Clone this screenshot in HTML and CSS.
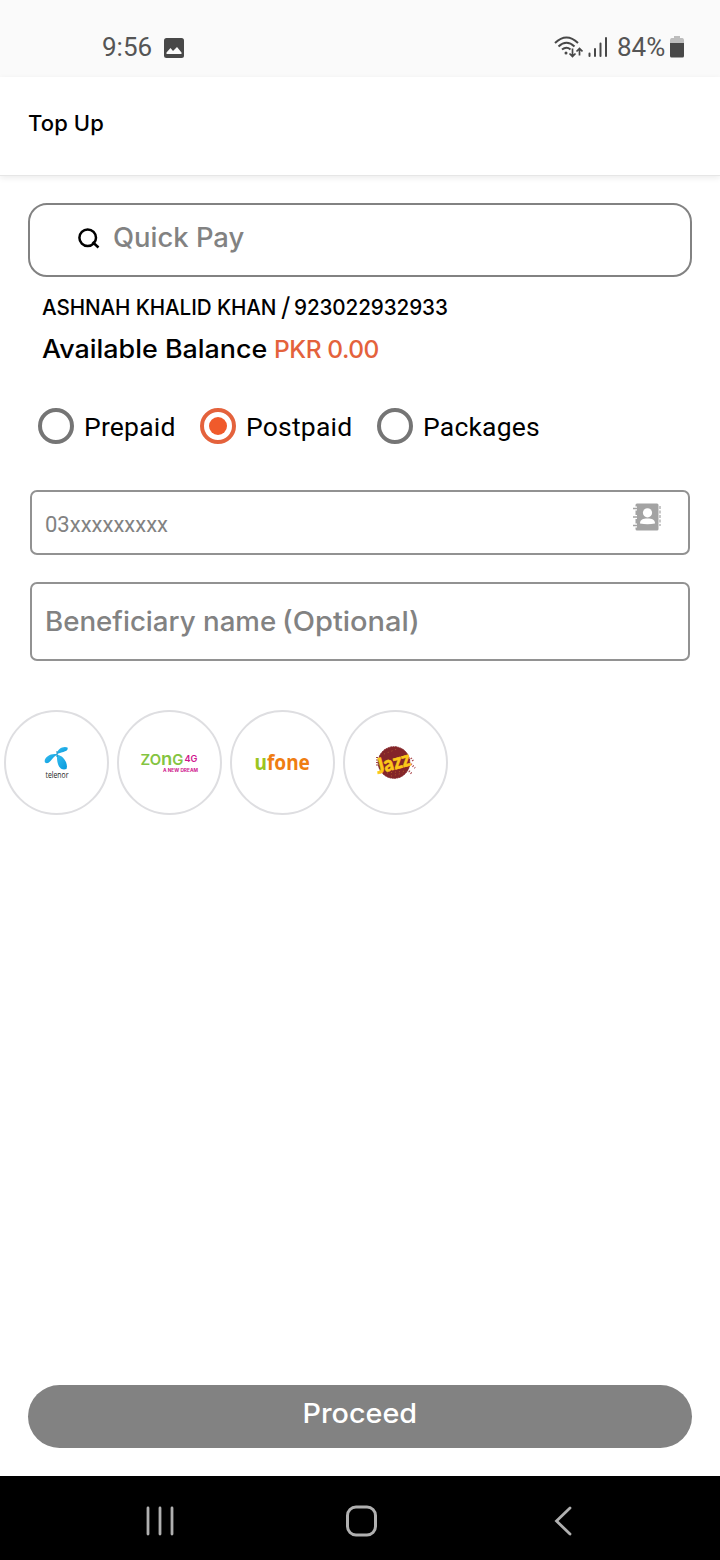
FILE: index.html
```html
<!DOCTYPE html>
<html lang="en">
<head>
<meta charset="utf-8">
<title>Top Up</title>
<link rel="stylesheet" href="styles.css">
</head>
<body>
<div class="screen">
  <div class="status">
    <span class="time">9:56</span>
    <svg class="picture" width="20" height="20" viewBox="0 0 20 20"><rect width="20" height="20" rx="2.500" fill="#484848"/><path d="M2.500 16V14.500L6.500 10L9 13L13 9L17.500 14.500V16Z" fill="#fafafa"/></svg>
    <svg class="wifi" width="29" height="24" viewBox="0 0 29 24" fill="none" stroke="#484848" stroke-width="2"><path d="M1 8Q12.500 -3 24 8M4.500 11.500Q12.500 4 20.500 11.500M8 14.500Q12.500 11 16.500 14.500"/><circle cx="12" cy="18" r="1.500" fill="#484848" stroke="none"/><path d="M18.500 13.500V21.500M15.500 18.500L18.500 21.500L21.500 18.500M25.500 20.500V13.500M22.500 16.500L25.500 13.500L28.500 16.500" stroke-width="1.700"/></svg>
    <svg class="signal" width="19" height="20" viewBox="0 0 19 20" stroke="#484848" stroke-width="2" stroke-linecap="round"><path d="M1.500 16.500V19M7 12V19M12.500 6.500V19M18 1V19"/></svg>
    <span class="percent">84%</span>
    <svg class="battery" width="14" height="22" viewBox="0 0 14 22"><path d="M4 0H10V2H12.500Q14 2.500 14 4V8H0V4Q0 2.500 1.500 2H4Z" fill="#bdbdbd"/><path d="M0 7H14V20Q14 21.500 12.500 21.500H1.500Q0 21.500 0 20Z" fill="#484848"/></svg>
  </div>
  <header class="header"><h1 class="title">Top Up</h1></header>
  <main class="content">
    <div class="search">
      <svg width="22" height="21" viewBox="0 0 22 21" fill="none" stroke="#000" stroke-width="2.500"><circle cx="9.700" cy="9.800" r="8.300"/><path d="M14.500 14L20.500 19.500"/></svg>
      <span class="search-text">Quick Pay</span>
    </div>
    <div class="account">
      <p class="name"><span class="holder">ASHNAH KHALID KHAN</span><span class="slash">/</span><span class="number">923022932933</span></p>
      <p class="balance"><span class="label">Available Balance</span><span class="amount">PKR 0.00</span></p>
    </div>
    <div class="radios">
      <div class="radio prepaid"><i class="dot"></i><span>Prepaid</span></div>
      <div class="radio postpaid on"><i class="dot"></i><span>Postpaid</span></div>
      <div class="radio"><i class="dot"></i><span>Packages</span></div>
    </div>
    <div class="field phone">
      <span class="phone-text">03xxxxxxxxx</span>
      <svg width="28" height="28" viewBox="0 0 28 28"><rect x="2.500" y=".500" width="23" height="27" rx="1.500" fill="#a3a3a3"/><path d="M0 5.500H4M0 14H4M0 22.500H4" stroke="#fff" stroke-width="4"/><path d="M0 5.500H4.500M0 14H4.500M0 22.500H4.500" stroke="#a3a3a3" stroke-width="1.600"/><circle cx="14.500" cy="9.800" r="4.600" fill="#fff"/><path d="M7 20.500C7 16.500 10 15.500 14.500 15.500S22 16.500 22 20.500Q14.500 22 7 20.500Z" fill="#fff"/><path d="M27 3V23" stroke="#a3a3a3" stroke-width="1.200" stroke-dasharray="3 1.500"/></svg>
    </div>
    <div class="field beneficiary"><span class="ben-text">Beneficiary name</span><span class="opt-text">(Optional)</span></div>
    <div class="operators">
      <div class="operator">
        <svg width="101" height="101" viewBox="0 0 101 101"><defs><linearGradient id="blue" x2="1" y2="1"><stop stop-color="#35bdf0"/><stop offset="1" stop-color="#0799dc"/></linearGradient></defs><g fill="url(#blue)"><path d="M51 42C51 36.500 58 33.500 61.500 35.500C63 39.500 57 39.500 51 42Z"/><path d="M51.500 42.500C45 40.500 37 46 39 50.500C43.500 53.500 45 46 51.500 42.500Z"/><path d="M51 42.500C57 43.500 62.500 51 60.500 57C53 59.500 50.500 51 51 42.500Z"/></g><path d="M51 39V45" stroke="#168bbd"/><text class="telenor" x="39.500" y="66" textLength="23" lengthAdjust="spacingAndGlyphs">telenor</text></svg>
      </div>
      <div class="operator">
        <svg width="101" height="101" viewBox="0 0 101 101"><text class="zong" x="21.500" y="53" textLength="43" lengthAdjust="spacingAndGlyphs">ZO<tspan class="arch">n</tspan>G</text><text class="four" x="65.500" y="49.500" textLength="13" lengthAdjust="spacingAndGlyphs">4G</text><text class="dream" x="44" y="60" textLength="35" lengthAdjust="spacingAndGlyphs">A NEW DREAM</text></svg>
      </div>
      <div class="operator">
        <svg width="101" height="101" viewBox="0 0 101 101"><text class="ufone" x="22.500" y="58" textLength="55.500" lengthAdjust="spacingAndGlyphs"><tspan fill="#9bc520">u</tspan>fone</text></svg>
      </div>
      <div class="operator">
        <svg width="101" height="101" viewBox="0 0 101 101"><circle cx="49" cy="50.500" r="15.800" fill="#842529" stroke="#842529" stroke-dasharray="2 .500"/><path d="M32 45V54M66 46L69 50M66 52L70 56M64 59L67 62" stroke="#a64045" stroke-dasharray="1 1.500" stroke-width="2"/><path d="M39 42L52 37M42 61L61 59M46 64L58 61" stroke="#ad5b2b" stroke-dasharray="1 3"/><text class="jazz" transform="translate(33 62) rotate(-15)" textLength="35" lengthAdjust="spacingAndGlyphs">Jazz</text></svg>
      </div>
    </div>
    <button class="proceed"><span class="proceed-text">Proceed</span></button>
  </main>
  <nav class="nav">
    <svg width="28" height="30" viewBox="0 0 28 30" stroke="#b0b0b0" stroke-width="2.800" stroke-linecap="round"><path d="M2 2V28M14 2V28M26 2V28"/></svg>
    <svg class="home" width="31" height="32" viewBox="0 0 31 32" fill="none" stroke="#b0b0b0" stroke-width="3"><rect x="1.500" y="2" width="28" height="28" rx="8.500"/></svg>
    <svg width="18" height="30" viewBox="0 0 18 30" fill="none" stroke="#b0b0b0" stroke-width="2.800" stroke-linecap="round"><path d="M16 2L2.500 15L16 28"/></svg>
  </nav>
</div>
</body>
</html>
```
FILE: styles.css
```css
* { box-sizing: border-box; }
body { margin: 0; background: #fff; color: #000; font-family: Inter, sans-serif; }
h1, p { margin: 0; font-weight: inherit; }
svg { display: block; flex: none; }
.screen { width: 720px; height: 1560px; display: flex; flex-direction: column; }
.status { height: 77px; background: #fafafa; display: flex; align-items: center; padding: 17px 36px 0 102px; font: 26px/28px Roboto, sans-serif; color: #555; }
.time { width: 62px; margin-top: -1px; }
.picture { margin-top: 1px; }
.wifi { margin-left: 370px; }
.signal { margin-left: 5px; }
.percent { margin-left: 10px; width: 53px; margin-top: -1px; }
.header { height: 99px; padding: 33px 28px 0; border-bottom: 1px solid #e6e6e6; box-shadow: 0 2px 6px rgba(0,0,0,.08); }
.title { font-size: 22px; line-height: 26px; font-weight: 500; letter-spacing: .1px; }
.content { flex: 1; display: flex; flex-direction: column; padding-top: 27px; }
.search { height: 74px; margin: 0 28px; border: 2px solid #828282; border-radius: 19px; display: flex; align-items: center; gap: 13px; padding: 0 48px 3px; }
.search-text { font-size: 27px; line-height: 30px; font-weight: 500; color: #828282; margin-top: -2px; transform: scaleX(1.015); transform-origin: left; }
.account { padding: 16px 42px 0; }
.name { display: flex; font-size: 22px; line-height: 28px; white-space: nowrap; }
.holder { width: 239px; transform: scaleX(.938); transform-origin: left; font-weight: 450; letter-spacing: -.1px; }
.slash { font-size: 26px; width: 13px; }
.number { transform: scaleX(.938); transform-origin: left; font-weight: 450; letter-spacing: -.1px; }
.balance { display: flex; margin-top: 14px; font-size: 25px; line-height: 28px; }
.label { width: 232px; font-weight: 450; white-space: nowrap; transform: scaleX(1.075); transform-origin: left; }
.amount { color: #e4623c; font-weight: 500; font-size: 24.500px; letter-spacing: -.45px; }
.radios { display: flex; margin: 45px 0 0 38px; height: 36px; font: 26.500px/37px Roboto, sans-serif; letter-spacing: .2px; }
.radio { display: flex; gap: 10px; }
.prepaid { width: 162px; }
.postpaid { width: 177px; }
.dot { width: 36px; height: 36px; border: 4px solid #757575; border-radius: 50%; display: grid; place-items: center; }
.on .dot { border-color: #e4623c; }
.on .dot::after { content: ""; width: 18px; height: 18px; border-radius: 50%; background: #f05a2b; }
.field { margin: 0 30px; border: 2px solid #929292; border-radius: 7px; display: flex; color: #828282; }
.phone { margin-top: 46px; height: 65px; padding: 11px 27px 0 13px; justify-content: space-between; }
.phone-text { font: 22px/26px Roboto, sans-serif; margin-top: 9px; }
.beneficiary { margin-top: 27px; height: 79px; padding: 0 13px; align-items: center; font-size: 27px; font-weight: 500; }
.ben-text { width: 237px; white-space: nowrap; transform: scaleX(1.025); transform-origin: left; }
.opt-text { transform: scaleX(1.075); transform-origin: left; }
.operators { display: flex; gap: 8px; padding: 49px 4px 0; }
.operator { width: 105px; height: 105px; border: 2px solid #dedee1; border-radius: 50%; }
.telenor { font: 8.500px "Open Sans", sans-serif; fill: #222; }
.zong { font: 600 14.500px Inter, sans-serif; fill: #84c441; }
.arch { font-size: 18px; }
.four { font: 600 9.500px Inter, sans-serif; fill: #cf168d; }
.dream { font: 700 4.500px Inter, sans-serif; fill: #cf168d; }
.ufone { font: 700 22px "Noto Sans", sans-serif; fill: #ef7d12; }
.jazz { font: 900 21px Lato, sans-serif; fill: #fcc719; stroke: #fcc719; stroke-width: .6px; }
.proceed { margin: auto 28px 28px; height: 63px; border: 0; border-radius: 32px; background: #828282; color: #fff; font: 500 27px/30px Inter, sans-serif; padding: 0 0 6px; }
.proceed-text { display: inline-block; transform: scaleX(1.065); }
.nav { height: 84px; background: #000; display: flex; align-items: center; padding: 6px 148px 0 146px; justify-content: space-between; }
.home { margin-right: 6px; }
```
